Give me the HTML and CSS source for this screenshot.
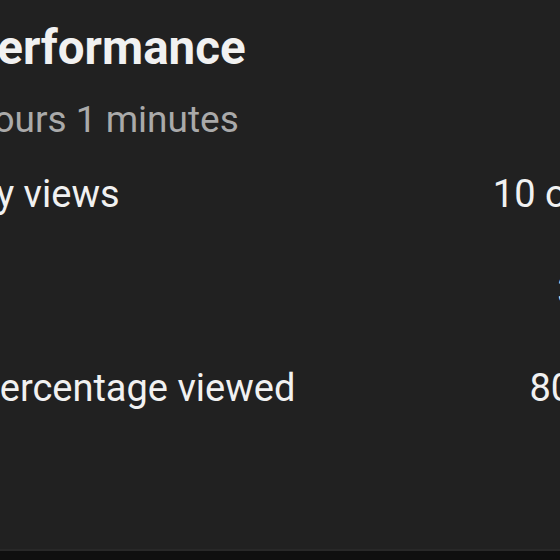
FILE: index.html
```html
<!DOCTYPE html>
<html>
<head>
    <title>Performance</title>
    <link rel="stylesheet" href="styles.css">
</head>
<body>
    <div class="panel">
        <h1 class="title">Performance</h1>
        <div class="subtitle">hours 1 minutes</div>
        <div class="stats">
            <div class="row">
                <span class="label">My views</span>
                <span class="value">10 out</span>
            </div>
            <div class="row">
                <span class="label"></span>
                <span class="value">30</span>
            </div>
            <div class="row">
                <span class="label">Percentage viewed</span>
                <span class="value">80%</span>
            </div>
        </div>
    </div>
    <div class="footer"></div>
</body>
</html>
```

FILE: styles.css
```css
html, body {
    height: 100%;
}

body {
    font-family: Roboto, 'Liberation Sans', sans-serif;
    background-color: #212121;
    color: #f1f1f1;
    margin: 0;
    padding: 0;
    display: flex;
    flex-direction: column;
    overflow: hidden;
}

.panel {
    flex: 1;
    margin: 0 -40px 0 -28px;
    padding-top: 18px;
}

.title {
    font-size: 47.5px;
    line-height: 60px;
    font-weight: 700;
    margin: 0 0 0 -5px;
}

.subtitle {
    font-size: 37px;
    line-height: 48px;
    color: #aaaaaa;
    margin-top: 18px;
    padding-left: 1px;
}

.stats {
    display: flex;
    flex-direction: column;
    gap: 49px;
    margin-top: 26px;
    padding-left: 4px;
}

.row {
    display: flex;
    justify-content: space-between;
    font-size: 38px;
    line-height: 48px;
    white-space: nowrap;
}

.row:first-child .label {
    margin-left: -13px;
}

.footer {
    height: 9px;
    border-top: 2px solid #282828;
    background-color: #0f0f0f;
}
```
